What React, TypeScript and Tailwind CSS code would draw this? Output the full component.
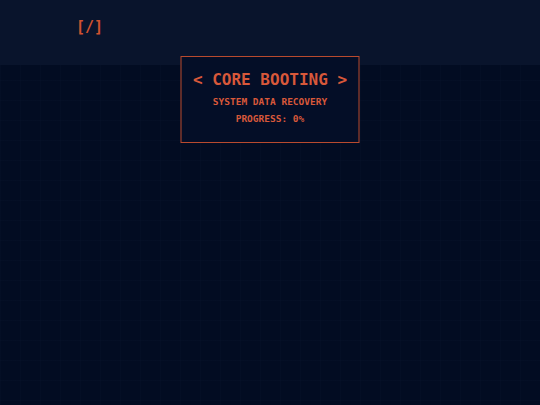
import React from 'react';

const mono = "font-['DejaVu_Sans_Mono','Liberation_Mono',monospace]";

export default function App() {
  return (
    <div className={`relative w-full min-h-[405px] bg-[#020c22] ${mono} bg-[linear-gradient(rgba(90,120,180,0.025)_1px,transparent_1px),linear-gradient(90deg,rgba(90,120,180,0.025)_1px,transparent_1px)] bg-[size:20px_20px]`}>
      <header className="h-[65px] bg-[#0a152e]/90 flex items-start pl-[76px] pt-[17px]">
        <span className="text-[15px] leading-5 font-bold text-[#cf5230]">[/]</span>
      </header>

      <div className="absolute top-[56px] left-1/2 -translate-x-1/2 w-[179px] border border-[#b94a2e] bg-[#040e27] pt-[11px] pb-[16px] flex flex-col items-center text-[#d8583a]">
        <div className="text-[16px] leading-6 font-bold whitespace-nowrap">&lt; CORE BOOTING &gt;</div>
        <div className="mt-[3px] text-[9.5px] leading-[14px] font-bold whitespace-nowrap">SYSTEM DATA RECOVERY</div>
        <div className="mt-[3px] text-[9.5px] leading-[14px] font-bold whitespace-nowrap">PROGRESS: 0%</div>
      </div>
    </div>
  );
}
